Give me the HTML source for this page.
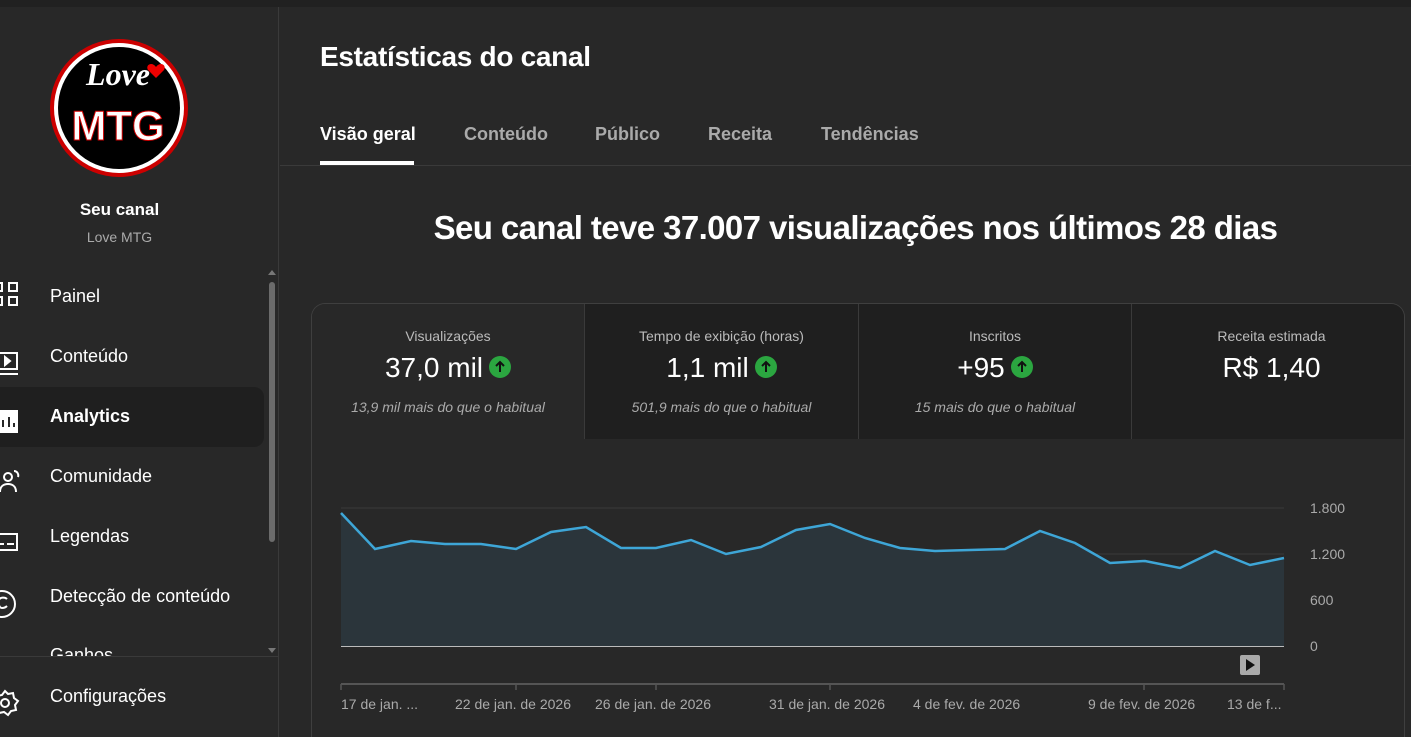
<!DOCTYPE html>
<html><head><meta charset="utf-8"><style>
*{margin:0;padding:0;box-sizing:border-box}
html{width:1411px;height:737px;overflow:hidden}
body{width:1411px;height:737px;background:#282828;font-family:"Liberation Sans",Roboto,sans-serif;color:#fff;position:relative;overflow:hidden}
.top{position:absolute;left:0;top:0;width:1411px;height:7px;background:#212121}
.side{position:absolute;left:0;top:7px;width:279px;height:730px;border-right:1px solid #3a3a3a}
.abs{position:absolute}
.nav{position:absolute;left:50px;font-size:18px;color:#fff}
.tab{position:absolute;top:124px;font-size:18px;font-weight:bold;color:#aaa}
.card{position:absolute;left:311px;top:303px;width:1094px;height:434px;border:1px solid #3f3f3f;border-bottom:none;border-radius:14px 14px 0 0;overflow:hidden;background:#282828}
.m{position:absolute;top:0;height:135px;text-align:center;background:#1f1f1f;border-left:1px solid #3a3a3a}
.m .t{font-size:14px;color:#bbb;margin-top:24px}
.m .v{font-size:28px;margin-top:8px;height:36px}
.m .s{font-size:14px;color:#aaa;font-style:italic;margin-top:11px}
.up{display:inline-block;width:22px;height:22px;border-radius:50%;background:#2ba640;vertical-align:-1px;margin-left:6px;position:relative}
.lbl{position:absolute;font-size:14px;color:#aaa}
</style></head><body>
<div class="top"></div>
<div class="side">
<svg class="abs" style="left:48px;top:30px" width="142" height="142" viewBox="0 0 142 142">
<circle cx="71" cy="71" r="69" fill="#c00"/><circle cx="71" cy="71" r="65" fill="#fff"/><circle cx="71" cy="71" r="61" fill="#000"/>
<text x="70" y="48" font-family="Liberation Serif" font-style="italic" font-weight="bold" font-size="32" fill="#fff" text-anchor="middle">Love</text>
<path d="M108 30c4-6 11-2 8 3l-8 8-8-8c-3-5 4-9 8-3z" fill="#e00"/>
<text x="70" y="103" font-family="Liberation Sans" font-weight="bold" font-size="42" fill="#fff" stroke="#c00" stroke-width="1" text-anchor="middle">MTG</text>
</svg>
<div class="abs" style="left:0;width:239px;top:193px;text-align:center;font-size:17px;font-weight:bold">Seu canal</div>
<div class="abs" style="left:0;width:239px;top:222px;text-align:center;font-size:14px;color:#aaa">Love MTG</div>
<div class="abs" style="left:0;top:380px;width:264px;height:60px;background:#1f1f1f;border-radius:0 10px 10px 0"></div>
<div class="abs" style="left:269px;top:275px;width:6px;height:260px;background:#6b6b6b;border-radius:3px"></div>
<div class="abs" style="left:268px;top:263px;width:0;height:0;border-left:4px solid transparent;border-right:4px solid transparent;border-bottom:5px solid #777"></div>
<div class="abs" style="left:268px;top:641px;width:0;height:0;border-left:4px solid transparent;border-right:4px solid transparent;border-top:5px solid #777"></div>
<div class="nav" style="top:279px">Painel</div>
<div class="nav" style="top:339px">Conteúdo</div>
<div class="nav" style="top:399px;font-weight:bold">Analytics</div>
<div class="nav" style="top:459px">Comunidade</div>
<div class="nav" style="top:519px">Legendas</div>
<div class="nav" style="top:579px">Detecção de conteúdo</div>
<div class="abs" style="left:0;top:630px;width:268px;height:19px;overflow:hidden"><div class="nav" style="top:8px">Ganhos</div></div>
<div class="abs" style="left:0;top:649px;width:279px;border-top:1px solid #3a3a3a"></div>
<div class="nav" style="top:679px">Configurações</div>
<svg class="abs" style="left:0;top:270px" width="22" height="440" fill="none" stroke="#fff" stroke-width="2">
<rect x="-6" y="6" width="8" height="8"/><rect x="9" y="6" width="8" height="8"/><rect x="-6" y="20" width="8" height="8"/><rect x="9" y="20" width="8" height="8"/>
<rect x="-6" y="76" width="23" height="16"/><path d="M-2 97h20"/><path d="M5 80l5 4-5 4z" fill="#fff"/>
<rect x="-6" y="134" width="23" height="21" fill="#fff"/><path d="M3 150v-7M9 150v-10M14 150v-4" stroke="#282828"/>
<circle cx="8" cy="200" r="4"/><path d="M0 215c0-6 4-8 8-8s8 2 8 8M14 194c3 0 5 3 4 6"/>
<rect x="-6" y="257" width="23" height="16"/><path d="M-3 267h7M7 267h7"/>
<circle cx="2" cy="327" r="13"/><path d="M7 322c-2-2-7-2-8 1s0 8 3 8 4-1 5-2"/>
<circle cx="5" cy="426" r="4"/><path d="M5 414l3 3 5-1 1 5 4 3-3 4 1 5-5 1-3 4-4-3-5 1 0-5-4-3 3-4-1-5 5-1z"/>
</svg>
</div>
<div class="abs" style="left:320px;top:41px;font-size:28px;font-weight:bold;letter-spacing:-0.3px">Estatísticas do canal</div>
<div class="tab" style="left:320px;color:#fff">Visão geral</div>
<div class="abs" style="left:320px;top:161px;width:94px;height:4px;background:#fff"></div>
<div class="tab" style="left:464px">Conteúdo</div>
<div class="tab" style="left:595px">Público</div>
<div class="tab" style="left:708px">Receita</div>
<div class="tab" style="left:821px">Tendências</div>
<div class="abs" style="left:280px;top:165px;width:1131px;border-top:1px solid #3a3a3a"></div>
<div class="abs" style="left:300px;width:1111px;top:209px;text-align:center;font-size:33px;font-weight:bold;letter-spacing:-0.6px">Seu canal teve 37.007 visualizações nos últimos 28 dias</div>
<div class="card">
<div class="m" style="left:0;width:272px;background:#282828;border-left:none"><div class="t">Visualizações</div><div class="v">37,0 mil<span class="up"><svg width="22" height="22" style="position:absolute;left:0;top:0"><path d="M11 16V6M7 10l4-4 4 4" stroke="#111" stroke-width="2" fill="none"/></svg></span></div><div class="s">13,9 mil mais do que o habitual</div></div>
<div class="m" style="left:272px;width:274px"><div class="t">Tempo de exibição (horas)</div><div class="v">1,1 mil<span class="up"><svg width="22" height="22" style="position:absolute;left:0;top:0"><path d="M11 16V6M7 10l4-4 4 4" stroke="#111" stroke-width="2" fill="none"/></svg></span></div><div class="s">501,9 mais do que o habitual</div></div>
<div class="m" style="left:546px;width:273px"><div class="t">Inscritos</div><div class="v">+95<span class="up"><svg width="22" height="22" style="position:absolute;left:0;top:0"><path d="M11 16V6M7 10l4-4 4 4" stroke="#111" stroke-width="2" fill="none"/></svg></span></div><div class="s">15 mais do que o habitual</div></div>
<div class="m" style="left:819px;width:280px"><div class="t">Receita estimada</div><div class="v">R$ 1,40</div></div>
</div>
<svg class="abs" style="left:0;top:0" width="1411" height="737">
<path d="M341 508H1284M341 554H1284M341 600H1284" stroke="#3a3a3a" stroke-width="1"/>
<path d="M341 513L375 549L411 541L445 544L481 544L516 549L551 532L586 527L621 548L656 548L691 540L726 554L761 547L796 530L830 524L865 538L900 548L935 551L970 550L1005 549L1040 531L1075 543L1110 563L1145 561L1180 568L1215 551L1250 565L1284 558V646H341Z" fill="#2b353b"/>
<path d="M341 513L375 549L411 541L445 544L481 544L516 549L551 532L586 527L621 548L656 548L691 540L726 554L761 547L796 530L830 524L865 538L900 548L935 551L970 550L1005 549L1040 531L1075 543L1110 563L1145 561L1180 568L1215 551L1250 565L1284 558" fill="none" stroke="#3ea6d7" stroke-width="2.5"/>
<path d="M341 646.5H1284" stroke="#bbb"/>
<path d="M341 684H1284" stroke="#555" stroke-width="2"/>
<path d="M341 684v6M516 684v6M656 684v6M830 684v6M1144 684v6M1284 684v6" stroke="#555" stroke-width="1.5"/>
<rect x="1240" y="655" width="20" height="20" rx="2" fill="#aaa"/><path d="M1246 659l9 6-9 6z" fill="#111"/>
</svg>
<div class="lbl" style="left:1310px;top:500px">1.800</div>
<div class="lbl" style="left:1310px;top:546px">1.200</div>
<div class="lbl" style="left:1310px;top:592px">600</div>
<div class="lbl" style="left:1310px;top:638px">0</div>
<div class="lbl" style="left:341px;top:696px">17 de jan. ...</div>
<div class="lbl" style="left:455px;top:696px">22 de jan. de 2026</div>
<div class="lbl" style="left:595px;top:696px">26 de jan. de 2026</div>
<div class="lbl" style="left:769px;top:696px">31 de jan. de 2026</div>
<div class="lbl" style="left:913px;top:696px">4 de fev. de 2026</div>
<div class="lbl" style="left:1088px;top:696px">9 de fev. de 2026</div>
<div class="lbl" style="left:1227px;top:696px">13 de f...</div>
</body></html>
